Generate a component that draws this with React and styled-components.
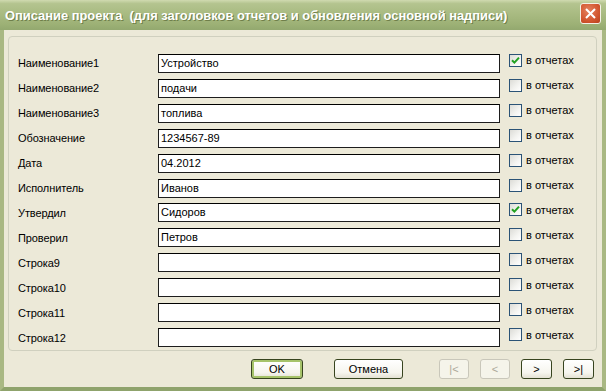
import React from "react";
import styled, { createGlobalStyle } from "styled-components";

const rows = [
  { label: "Наименование1", value: "Устройство", checked: true },
  { label: "Наименование2", value: "подачи", checked: false },
  { label: "Наименование3", value: "топлива", checked: false },
  { label: "Обозначение", value: "1234567-89", checked: false },
  { label: "Дата", value: "04.2012", checked: false },
  { label: "Исполнитель", value: "Иванов", checked: false },
  { label: "Утвердил", value: "Сидоров", checked: true },
  { label: "Проверил", value: "Петров", checked: false },
  { label: "Строка9", value: "", checked: false },
  { label: "Строка10", value: "", checked: false },
  { label: "Строка11", value: "", checked: false },
  { label: "Строка12", value: "", checked: false }
];

const CheckMark = () => (
  <svg width="9" height="9" viewBox="0 0 9 9">
    <path d="M1 4.2 L3.4 6.6 L8 1.6" fill="none" stroke="#21A121" strokeWidth="2" />
  </svg>
);

export default function App() {
  return (
    <>
      <GlobalStyle />
      <Window>
        <TitleBar>
          <Title>Описание проекта&nbsp; (для заголовков отчетов и обновления основной надписи)</Title>
          <CloseButton>
            <svg width="11" height="11" viewBox="0 0 11 11">
              <path d="M1 1 L10 10 M10 1 L1 10" stroke="#fff" strokeWidth="2" />
            </svg>
          </CloseButton>
        </TitleBar>
        <Body>
          <GroupBox>
            {rows.map(r => (
              <Row key={r.label}>
                <Label>{r.label}</Label>
                <TextBox>{r.value}</TextBox>
                <Check>
                  <Box>{r.checked && <CheckMark />}</Box>
                  в отчетах
                </Check>
              </Row>
            ))}
          </GroupBox>
          <Footer>
            <Button $default $width={52}>OK</Button>
            <Button $width={69}>Отмена</Button>
            <Nav>
              <Button $disabled $width={30}>|&lt;</Button>
              <Button $disabled $width={30}>&lt;</Button>
              <Button $width={31}>&gt;</Button>
              <Button $width={31}>&gt;|</Button>
            </Nav>
          </Footer>
        </Body>
      </Window>
    </>
  );
}

// ==== STYLES ====
const GlobalStyle = createGlobalStyle`
  body {
    margin: 0;
    font-family: "Liberation Sans", sans-serif;
    background: #fff;
  }
`;

const Window = styled.div`
  width: 606px;
  height: 391px;
  box-sizing: border-box;
  display: flex;
  flex-direction: column;
  background: #ece9d8;
  border-left: 4px solid #a9b883;
  border-right: 4px solid #a9b883;
  border-bottom: 4px solid #8fa36c;
`;

const TitleBar = styled.div`
  height: 30px;
  margin: 0 -4px;
  padding: 0 5px 0 5px;
  display: flex;
  align-items: center;
  justify-content: space-between;
  background: linear-gradient(
    to bottom,
    #d0dab0 0%,
    #b4c48f 12%,
    #a9bb82 45%,
    #9db176 80%,
    #93a86f 100%
  );
  flex-shrink: 0;
`;

const Title = styled.div`
  color: #fff;
  font-family: "Liberation Sans", sans-serif;
  font-weight: bold;
  font-size: 12.9px;
  text-shadow: 1px 1px 0 #6f7f4a;
  white-space: nowrap;
`;

const CloseButton = styled.div`
  width: 19px;
  height: 19px;
  margin-top: -3px;
  border: 1px solid #f3f0e6;
  border-radius: 3px;
  background: radial-gradient(circle at 40% 35%, #e5825f 0%, #d2562f 60%, #b8401c 100%);
  display: flex;
  align-items: center;
  justify-content: center;
`;

const Body = styled.div`
  flex: 1;
  display: flex;
  flex-direction: column;
  padding: 6px 5px 0 4px;
`;

const GroupBox = styled.div`
  height: 315px;
  box-sizing: border-box;
  border: 1px solid #d0d0bf;
  border-radius: 4px;
  padding: 14px 0 0 9px;
  display: flex;
  flex-direction: column;
`;

const Row = styled.div`
  height: 25px;
  display: grid;
  grid-template-columns: 140px 342px 1fr;
  align-items: center;
`;

const Label = styled.div`
  font-family: "Liberation Sans", sans-serif;
  font-size: 11px;
  letter-spacing: -0.1px;
  color: #000;
`;

const TextBox = styled.div`
  height: 19px;
  box-sizing: border-box;
  border: 1px solid #1d1d1d;
  border-top-color: #000;
  background: #fff;
  padding: 0 2px;
  font-family: "Liberation Sans", sans-serif;
  font-size: 11px;
  line-height: 17px;
  color: #000;
`;

const Check = styled.div`
  display: flex;
  align-items: center;
  gap: 4px;
  padding-left: 9px;
  margin-top: -6px;
  font-family: "Liberation Sans", sans-serif;
  font-size: 11px;
  color: #000;
`;

const Box = styled.div`
  width: 13px;
  height: 13px;
  box-sizing: border-box;
  border: 1px solid #2b5376;
  background: linear-gradient(135deg, #dcdcd7 0%, #f4f4f1 60%, #ffffff 100%);
  display: flex;
  align-items: center;
  justify-content: center;
`;

const Footer = styled.div`
  display: flex;
  align-items: center;
  padding: 8px 0 0 243px;
  gap: 31px;
`;

const Nav = styled.div`
  display: flex;
  gap: 11px;
  margin-left: 5px;
`;

const Button = styled.div`
  width: ${p => p.$width}px;
  height: 20px;
  box-sizing: border-box;
  border-radius: 3px;
  border: 1px solid ${p => (p.$disabled ? "#c9c7ba" : "#37441f")};
  background: ${p =>
    p.$disabled ? "#f5f4ea" : "linear-gradient(to bottom, #ffffff 0%, #f6f5ee 70%, #e3e1d3 100%)"};
  box-shadow: ${p => (p.$default ? "inset 0 0 0 2px #a6c36a" : "none")};
  color: ${p => (p.$disabled ? "#aca899" : "#000")};
  font-family: "Liberation Sans", sans-serif;
  font-size: 11px;
  display: flex;
  align-items: center;
  justify-content: center;
`;
